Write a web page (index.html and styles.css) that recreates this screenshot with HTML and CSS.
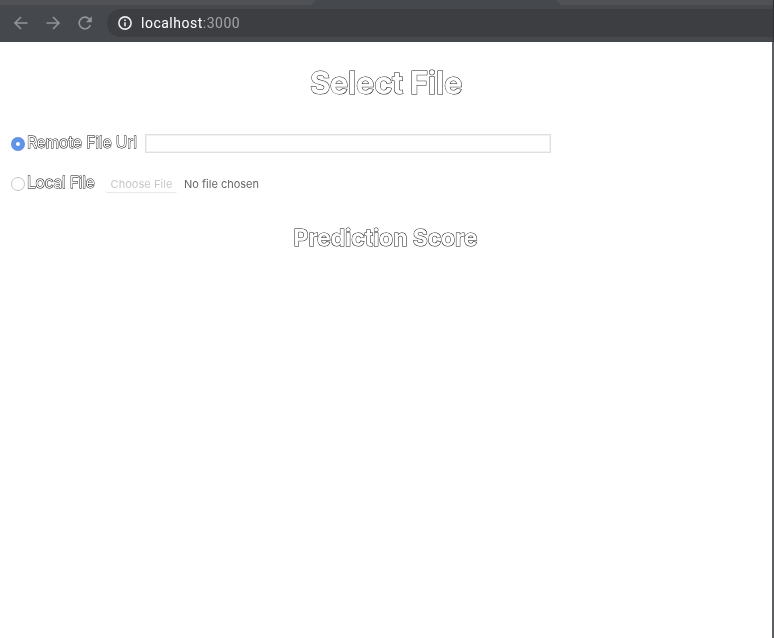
FILE: index.html
```html
<!DOCTYPE html>
<html lang="en">
<head>
<meta charset="utf-8">
<title>Select File</title>
<link rel="stylesheet" href="styles.css">
</head>
<body>
<div class="window">
  <header class="browser">
    <div class="tabs"><div class="tab tab-left"></div><div class="tab tab-active"></div><div class="tab tab-right"></div></div>
    <div class="toolbar">
      <svg class="nav" viewBox="0 0 16 16"><path d="M14.5 8H2M8 2 2 8l6 6"/></svg>
      <svg class="nav" viewBox="0 0 16 16"><path d="M1.5 8H14M8 2l6 6-6 6"/></svg>
      <svg class="nav" viewBox="0 0 16 16"><path d="M13.4 10A5.8 5.8 0 1 1 12.2 4L14 6"/><path class="solid" d="M14.8 1.2v6H8.9z"/></svg>
      <div class="address">
        <svg class="info" viewBox="0 0 16 16"><circle cx="8" cy="8" r="6.1"/><path d="M8 7.3v4M8 4.5v1.6"/></svg>
        <span class="url"><span class="host">localhost</span>:3000</span>
      </div>
    </div>
  </header>
  <main>
    <h1><span class="outline">Select File</span></h1>
    <div class="row">
      <span class="radio checked"></span>
      <span class="label outline label-remote">Remote File Url</span>
      <input class="field" type="text" aria-label="Remote File Url">
    </div>
    <div class="row row-local">
      <span class="radio"></span>
      <span class="label outline label-local">Local File</span>
      <button class="choose" disabled>Choose File</button>
      <span class="status">No file chosen</span>
    </div>
    <h2><span class="outline">Prediction Score</span></h2>
  </main>
</div>
</body>
</html>
```
FILE: styles.css
```css
* { box-sizing: border-box; }
body { margin: 0; background: #fff; font-family: Inter, sans-serif; overflow: hidden; }
.window { width: 774px; height: 638px; }
.browser { height: 42px; background: #45484c; border-right: 1px solid #2f3134; }
.tabs { display: flex; height: 5px; }
.tab-left { width: 316px; background: #505155; clip-path: polygon(0 0, 100% 0, calc(100% - 4px) 100%, 0 100%); }
.tab-active { width: 240px; }
.tab-right { flex: 1; background: #505155; clip-path: polygon(0 0, 100% 0, 100% 100%, 5px 100%); }
.toolbar { display: flex; align-items: center; height: 37px; padding: 0 0 2px 13px; }
.nav { width: 16px; height: 16px; margin-right: 16px; fill: none; stroke: #929497; stroke-width: 1.6; }
.nav .solid { fill: #929497; stroke: none; }
.address { display: flex; align-items: center; flex: 1; height: 28px; margin-left: -2px; padding-left: 10px; border-radius: 14px 0 0 14px; background: #3d3e41; }
.info { width: 16px; height: 16px; margin-right: 8px; fill: none; stroke: #ededee; stroke-width: 1.6; }
.url { font: 14px/20px Roboto, sans-serif; letter-spacing: 0.5px; color: #a3a4a6; will-change: transform; }
.host { color: #fff; }
main { height: 596px; padding: 22px 0 0 11px; border-right: 2px solid #5c5e61; }
h1, h2 { margin: 0; text-align: center; font-weight: 700; will-change: transform; }
h1 { height: 38px; padding-right: 11px; font-size: 31px; line-height: 38px; letter-spacing: -0.35px; }
h2 { height: 30px; margin-top: 29px; padding-right: 12px; font-size: 23px; line-height: 30px; letter-spacing: -0.1px; }
.outline { color: #fff; -webkit-text-stroke: 1px #111; paint-order: stroke fill; }
.row { display: flex; align-items: center; height: 20px; margin-top: 32px; }
.row-local { margin-top: 20px; }
.radio { width: 14px; height: 14px; margin-right: 2px; border: 1px solid #c4c4c4; border-radius: 50%; background: #fff; }
.checked { border: 5px solid #6092e5; }
.label { margin-top: -2px; font-size: 15.5px; line-height: 20px; letter-spacing: -0.1px; white-space: nowrap; will-change: transform; -webkit-text-stroke: 0.9px #000; }
.label-remote { width: 118px; }
.label-local { width: 78px; letter-spacing: -0.2px; }
.field { width: 406px; height: 19px; margin-top: -1px; padding: 1px 3px; border: 1px solid #dfdfdf; box-shadow: inset 0 0 0 1px #f2f2f2; background: #fff; outline: 0; }
.choose { width: 73px; height: 17px; padding: 0 0 1px; border: 0; border-bottom: 1px solid #e9e9e9; border-radius: 3px; background: #fff; color: #c7c7c7; font: 11px/14px Inter, sans-serif; letter-spacing: 0.05px; will-change: transform; }
.status { margin-left: 6px; color: #666; font-size: 11px; line-height: 16px; letter-spacing: 0; will-change: transform; }
```
